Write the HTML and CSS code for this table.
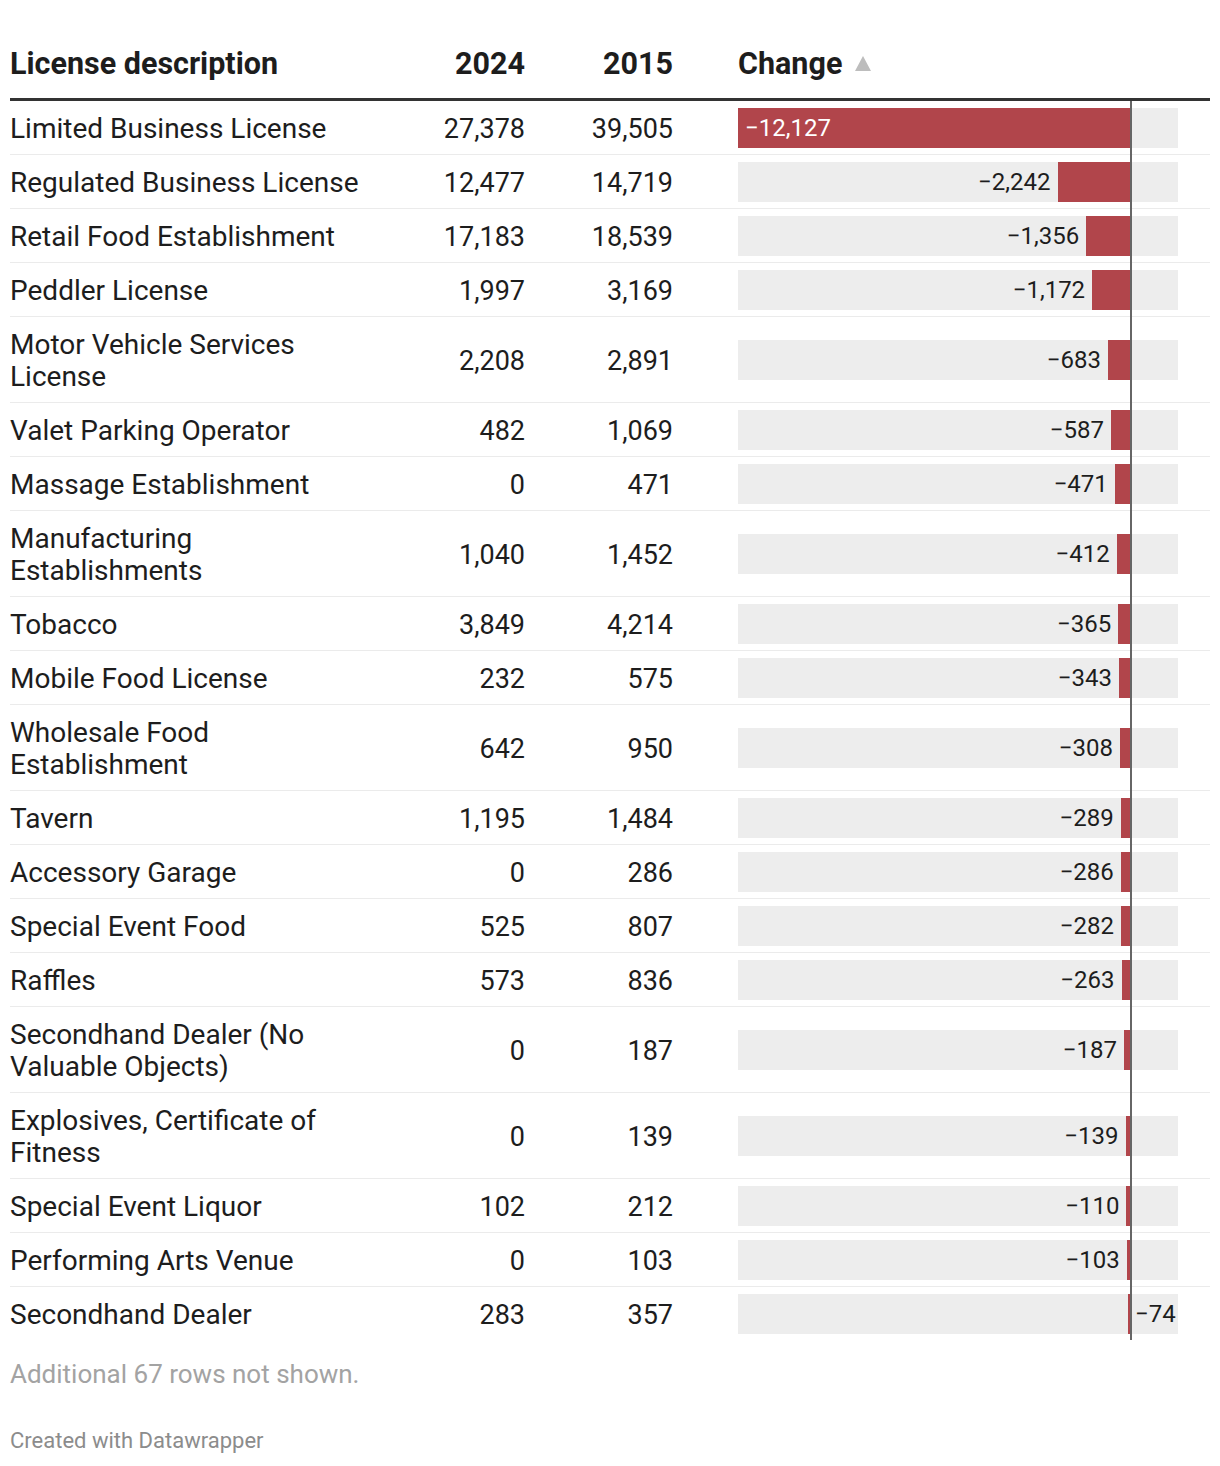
FILE: index.html
```html
<!DOCTYPE html>
<html>
<head>
<meta charset="utf-8">
<link rel="stylesheet" href="styles.css">
</head>
<body>
<div class="chart">
  <div class="thead">
    <div class="th desc">License description</div>
    <div class="th num">2024</div>
    <div class="th num">2015</div>
    <div class="th gap"></div>
    <div class="th change">Change<svg class="sort" width="16" height="15" viewBox="0 0 16 15"><polygon points="8,0 16,15 0,15" fill="#bdbdbd"/></svg></div>
  </div>
  <div class="tbody">
    <div class="row"><div class="desc">Limited Business License</div><div class="num">27,378</div><div class="num">39,505</div><div class="gap"></div><div class="change"><div class="track"><div class="neg"><div class="bar" style="width:392px"><span class="label in">−12,127</span></div></div><div class="pos"></div></div></div></div>
    <div class="row"><div class="desc">Regulated Business License</div><div class="num">12,477</div><div class="num">14,719</div><div class="gap"></div><div class="change"><div class="track"><div class="neg"><span class="label out">−2,242</span><div class="bar" style="width:72.5px"></div></div><div class="pos"></div></div></div></div>
    <div class="row"><div class="desc">Retail Food Establishment</div><div class="num">17,183</div><div class="num">18,539</div><div class="gap"></div><div class="change"><div class="track"><div class="neg"><span class="label out">−1,356</span><div class="bar" style="width:43.8px"></div></div><div class="pos"></div></div></div></div>
    <div class="row"><div class="desc">Peddler License</div><div class="num">1,997</div><div class="num">3,169</div><div class="gap"></div><div class="change"><div class="track"><div class="neg"><span class="label out">−1,172</span><div class="bar" style="width:37.9px"></div></div><div class="pos"></div></div></div></div>
    <div class="row"><div class="desc">Motor Vehicle Services License</div><div class="num">2,208</div><div class="num">2,891</div><div class="gap"></div><div class="change"><div class="track"><div class="neg"><span class="label out">−683</span><div class="bar" style="width:22.1px"></div></div><div class="pos"></div></div></div></div>
    <div class="row"><div class="desc">Valet Parking Operator</div><div class="num">482</div><div class="num">1,069</div><div class="gap"></div><div class="change"><div class="track"><div class="neg"><span class="label out">−587</span><div class="bar" style="width:19px"></div></div><div class="pos"></div></div></div></div>
    <div class="row"><div class="desc">Massage Establishment</div><div class="num">0</div><div class="num">471</div><div class="gap"></div><div class="change"><div class="track"><div class="neg"><span class="label out">−471</span><div class="bar" style="width:15.2px"></div></div><div class="pos"></div></div></div></div>
    <div class="row"><div class="desc">Manufacturing Establishments</div><div class="num">1,040</div><div class="num">1,452</div><div class="gap"></div><div class="change"><div class="track"><div class="neg"><span class="label out">−412</span><div class="bar" style="width:13.3px"></div></div><div class="pos"></div></div></div></div>
    <div class="row"><div class="desc">Tobacco</div><div class="num">3,849</div><div class="num">4,214</div><div class="gap"></div><div class="change"><div class="track"><div class="neg"><span class="label out">−365</span><div class="bar" style="width:11.8px"></div></div><div class="pos"></div></div></div></div>
    <div class="row"><div class="desc">Mobile Food License</div><div class="num">232</div><div class="num">575</div><div class="gap"></div><div class="change"><div class="track"><div class="neg"><span class="label out">−343</span><div class="bar" style="width:11.1px"></div></div><div class="pos"></div></div></div></div>
    <div class="row"><div class="desc">Wholesale Food Establishment</div><div class="num">642</div><div class="num">950</div><div class="gap"></div><div class="change"><div class="track"><div class="neg"><span class="label out">−308</span><div class="bar" style="width:10px"></div></div><div class="pos"></div></div></div></div>
    <div class="row"><div class="desc">Tavern</div><div class="num">1,195</div><div class="num">1,484</div><div class="gap"></div><div class="change"><div class="track"><div class="neg"><span class="label out">−289</span><div class="bar" style="width:9.3px"></div></div><div class="pos"></div></div></div></div>
    <div class="row"><div class="desc">Accessory Garage</div><div class="num">0</div><div class="num">286</div><div class="gap"></div><div class="change"><div class="track"><div class="neg"><span class="label out">−286</span><div class="bar" style="width:9.2px"></div></div><div class="pos"></div></div></div></div>
    <div class="row"><div class="desc">Special Event Food</div><div class="num">525</div><div class="num">807</div><div class="gap"></div><div class="change"><div class="track"><div class="neg"><span class="label out">−282</span><div class="bar" style="width:9.1px"></div></div><div class="pos"></div></div></div></div>
    <div class="row"><div class="desc">Raffles</div><div class="num">573</div><div class="num">836</div><div class="gap"></div><div class="change"><div class="track"><div class="neg"><span class="label out">−263</span><div class="bar" style="width:8.5px"></div></div><div class="pos"></div></div></div></div>
    <div class="row"><div class="desc">Secondhand Dealer (No Valuable Objects)</div><div class="num">0</div><div class="num">187</div><div class="gap"></div><div class="change"><div class="track"><div class="neg"><span class="label out">−187</span><div class="bar" style="width:6px"></div></div><div class="pos"></div></div></div></div>
    <div class="row"><div class="desc">Explosives, Certificate of Fitness</div><div class="num">0</div><div class="num">139</div><div class="gap"></div><div class="change"><div class="track"><div class="neg"><span class="label out">−139</span><div class="bar" style="width:4.5px"></div></div><div class="pos"></div></div></div></div>
    <div class="row"><div class="desc">Special Event Liquor</div><div class="num">102</div><div class="num">212</div><div class="gap"></div><div class="change"><div class="track"><div class="neg"><span class="label out">−110</span><div class="bar" style="width:3.6px"></div></div><div class="pos"></div></div></div></div>
    <div class="row"><div class="desc">Performing Arts Venue</div><div class="num">0</div><div class="num">103</div><div class="gap"></div><div class="change"><div class="track"><div class="neg"><span class="label out">−103</span><div class="bar" style="width:3.3px"></div></div><div class="pos"></div></div></div></div>
    <div class="row last"><div class="desc">Secondhand Dealer</div><div class="num">283</div><div class="num">357</div><div class="gap"></div><div class="change"><div class="track"><div class="neg"><div class="bar" style="width:2.4px"></div></div><div class="pos"><span class="label right">−74</span></div></div></div></div>
  </div>
  <div class="note">Additional 67 rows not shown.</div>
  <div class="credit">Created with Datawrapper</div>
</div>
</body>
</html>
```
FILE: styles.css
```css
* { box-sizing: border-box; }
body {
  margin: 0;
  background: #fff;
  font-family: Roboto, "Noto Sans", "Liberation Sans", sans-serif;
  color: #1d1d1d;
}
.chart {
  padding: 38px 10px 0 10px;
  width: 1220px;
}
.thead, .row {
  display: grid;
  grid-template-columns: 370px 145px 148px 65px 472px;
}
.thead {
  border-bottom: 3px solid #333;
  align-items: center;
}
.th {
  font-weight: 700;
  font-size: 30.5px;
  line-height: 36px;
  padding: 8px 0 16px;
}
.th.change {
  display: flex;
  align-items: center;
}
.num { text-align: right; }
.sort {
  margin-left: 13px;
  margin-top: -2px;
}
.row {
  border-bottom: 1px solid #ebebeb;
  font-size: 28px;
  line-height: 32px;
  align-items: center;
}
.row.last { border-bottom: none; }
.row > .desc, .row > .num {
  padding: 12px 0 9px;
}
.row > .num { font-size: 27px; }
.row > .desc { padding-right: 4px; }
.row > .change {
  align-self: stretch;
  position: relative;
  display: flex;
  align-items: center;
}
.row > .change::after {
  content: "";
  position: absolute;
  left: 392px;
  top: 0;
  bottom: -1px;
  width: 2px;
  background: #666;
}
.row.last > .change::after { bottom: 0; }
.track {
  width: 440px;
  height: 40px;
  background: #ededed;
  display: flex;
}
.neg {
  width: 392px;
  display: flex;
  justify-content: flex-end;
  align-items: stretch;
}
.pos {
  flex: 1;
  display: flex;
  align-items: center;
}
.bar {
  background: #b1454b;
  display: flex;
  align-items: center;
  flex: none;
}
.label {
  font-size: 24px;
  line-height: 40px;
  white-space: nowrap;
  color: #1d1d1d;
}
.label.in { color: #fff; padding-left: 7px; }
.label.out { margin-right: 7px; }
.label.right { margin-left: 5px; }
.note {
  margin-top: 18px;
  font-size: 26px;
  line-height: 32px;
  color: #a3a3a3;
}
.credit {
  margin-top: 37px;
  font-size: 22px;
  line-height: 28px;
  color: #8c8c8c;
}
```
